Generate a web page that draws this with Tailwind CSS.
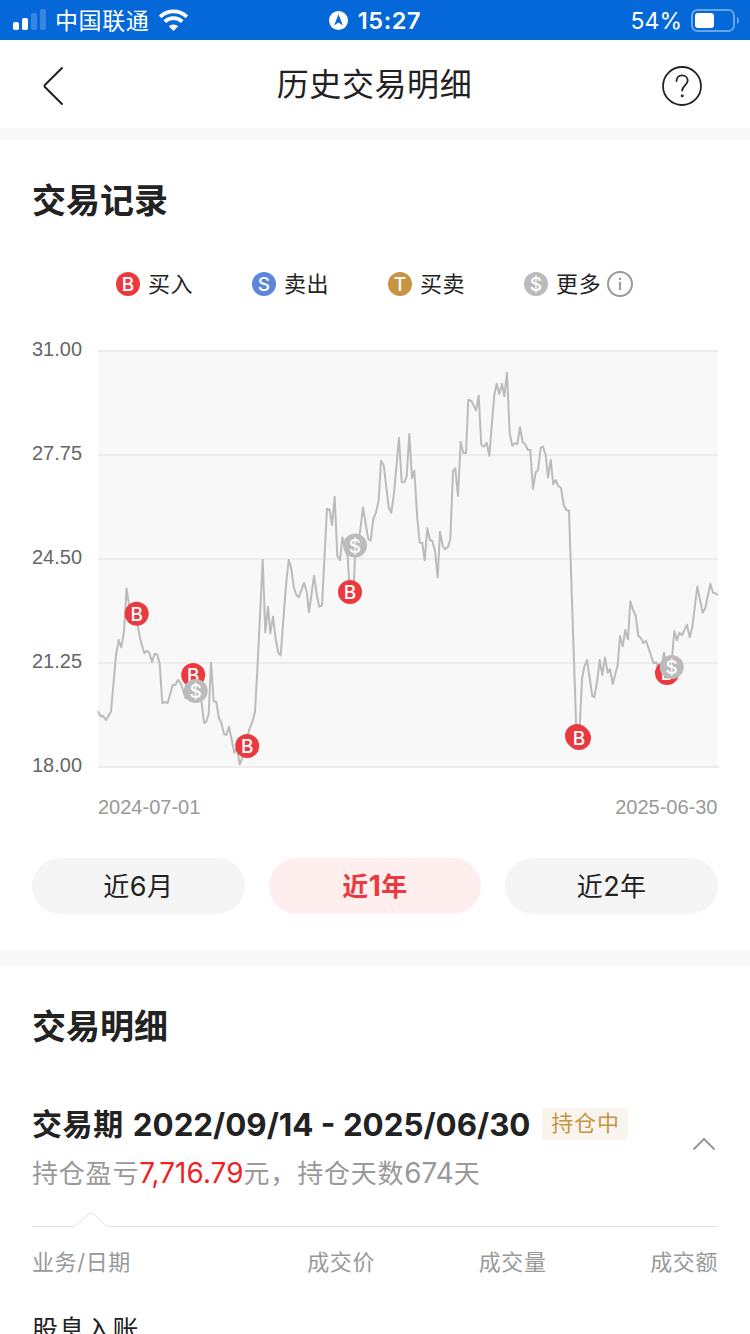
<!DOCTYPE html>
<html lang="zh-CN">
<head>
    <meta charset="UTF-8">
    <meta name="viewport" content="width=device-width, initial-scale=1.0">
    <title>历史交易明细</title>
    <script src="https://cdn.jsdelivr.net/npm/@tailwindcss/browser@4"></script>
    <style>
        body {
            font-family: 'Inter', 'Noto Sans CJK SC', sans-serif;
        }
    </style>
</head>
<body class="bg-white text-[#222] w-[750px] h-[1334px] overflow-hidden">
    <!-- Status bar -->
    <div class="h-10 bg-[#0568d8] text-white grid grid-cols-3 items-center">
        <div class="flex items-center pl-[13px]">
            <svg class="w-[33px] h-[22px]" viewBox="0 0 33 22" fill="currentColor">
                <rect x="0" y="13" width="6" height="8" rx="1.8"/>
                <rect x="9" y="9" width="6" height="12" rx="1.8"/>
                <rect x="18" y="4" width="6" height="17" rx="1.8" opacity=".2"/>
                <rect x="27" y="0" width="6" height="21" rx="1.8" opacity=".2"/>
            </svg>
            <span class="ml-[9px] pt-0.5 text-[23px] leading-[38px] tracking-[0.6px]">中国联通</span>
            <svg class="ml-[9px] w-[31px] h-[22px]" viewBox="0 0 31 22" fill="none" stroke="currentColor" stroke-width="3.8">
                <path d="M2.2 7.8a19 19 0 0 1 26.600 0"/>
                <path d="M6.800 12.600a12.500 12.500 0 0 1 17.400 0"/>
                <path d="M15.500 22l-4.700-4.700a6.800 6.800 0 0 1 9.400 0z" fill="currentColor" stroke="none"/>
            </svg>
        </div>
        <div class="flex items-center justify-center gap-[10px]">
            <svg class="w-[19px] h-[19px]" viewBox="0 0 19 19">
                <circle cx="9.500" cy="9.500" r="9.500" fill="#fff"/>
                <path d="M9.500 3.300l4.400 11.300-4.400-3-4.400 3z" fill="#0568d8"/>
            </svg>
            <span class="pt-0.5 text-[23.500px] font-semibold tracking-[0.6px]">15:27</span>
        </div>
        <div class="flex items-center justify-end pr-[11px]">
            <span class="pt-0.5 text-[23px]">54%</span>
            <svg class="ml-[9px] w-[48px] h-[23px]" viewBox="0 0 48 23">
                <rect x="1" y="1" width="42" height="21" rx="5.500" fill="none" stroke="#fff" stroke-opacity=".4" stroke-width="2"/>
                <rect x="4" y="4" width="19" height="15" rx="3" fill="#fff"/>
                <path d="M46 8c2.500 1 2.500 6 0 7z" fill="#fff" fill-opacity=".45"/>
            </svg>
        </div>
    </div>

    <!-- Title bar -->
    <header class="h-[88px] flex items-center justify-between pl-[42px] pr-[48px]">
        <svg class="w-[42px] h-10 mt-1" viewBox="0 0 42 40" fill="none" stroke="#222" stroke-width="2" stroke-linecap="round" stroke-linejoin="round">
            <path d="M20 2L2.600 19.200v1.600L20 38"/>
        </svg>
        <h1 class="pt-px pl-[3px] text-[32px] leading-[48px] tracking-[0.6px]">历史交易明细</h1>
        <svg class="w-10 h-10 mt-1" viewBox="0 0 40 40" fill="none" stroke="#222" stroke-width="1.8" stroke-linecap="round">
            <circle cx="20" cy="20" r="19"/>
            <path d="M14.500 15c0-3.500 2.400-5.600 5.600-5.600s5.600 2.100 5.600 5.100c0 4.700-5.500 5-5.500 10.100"/>
            <circle cx="20.200" cy="29.700" r=".6"/>
        </svg>
    </header>
    <div class="h-3 bg-[#f8f8f8]"></div>

    <!-- Trade record chart -->
    <section class="h-[810px] pt-[36px]">
        <h2 class="px-8 text-[34px] leading-[50px] font-bold">交易记录</h2>

        <div class="mt-[42px] h-8 pl-[116px] flex items-center text-[22px]">
            <div class="w-[136px] flex items-center gap-2">
                <span class="w-6 h-6 rounded-full bg-[#eb3940] text-white text-[19px] leading-[25px] font-medium text-center">B</span>
                <span class="tracking-[0.6px]">买入</span>
            </div>
            <div class="w-[136px] flex items-center gap-2">
                <span class="w-6 h-6 rounded-full bg-[#5c86d9] text-white text-[19px] leading-[25px] font-medium text-center">S</span>
                <span class="tracking-[0.6px]">卖出</span>
            </div>
            <div class="w-[136px] flex items-center gap-2">
                <span class="w-6 h-6 rounded-full bg-[#c69443] text-white text-[19px] leading-[26px] font-medium text-center">T</span>
                <span class="tracking-[0.6px]">买卖</span>
            </div>
            <div class="flex items-center gap-2">
                <span class="w-6 h-6 rounded-full bg-[#bbb] text-white text-[19px] leading-[25px] font-medium text-center">$</span>
                <span class="tracking-[0.8px]">更多</span>
                <svg class="-ml-[3px] w-[26px] h-[26px]" viewBox="0 0 26 26" fill="none" stroke="#999" stroke-width="2">
                    <circle cx="13" cy="13" r="12"/>
                    <path d="M13 11v8M13 6.700v2.200"/>
                </svg>
            </div>
        </div>

        <svg class="block w-[750px] h-[500px] mt-[30px]" viewBox="0 330 750 500">
            <rect x="98" y="350" width="620" height="417" fill="#f8f8f8"/>
            <g stroke="#ececec" stroke-width="2">
                <path d="M98 351H718M98 455H718M98 559H718M98 663H718M98 767H719"/>
            </g>
            <g font-family="Liberation Sans, sans-serif" font-size="20" fill="#666">
                <text x="32" y="356">31.00</text>
                <text x="32" y="460">27.75</text>
                <text x="32" y="564">24.50</text>
                <text x="32" y="668">21.25</text>
                <text x="32" y="772">18.00</text>
                <text x="98" y="814" fill="#999">2024-07-01</text>
                <text x="717.500" y="814" fill="#999" text-anchor="end">2025-06-30</text>
            </g>
            <polyline fill="none" stroke="#bbb" stroke-width="2" stroke-linejoin="round" points="
                98,711.300 100.700,716.500 103,715.700 106,720 108.300,716.300 111,711.300 116,655 118.700,640 121.300,647.300 124,631.700
                126.500,588.500 128.700,603.300 132,610 138,626.700 140,638.300 144.300,653.300 147,650.700 149.300,652.700 152,662 154.700,653.700
                157.300,654.700 159.700,664 162.300,703.300 165,702 167.700,703 172.700,685 175.300,685 178,680 180.700,683.300 185.700,698.300
                190,688 198,684 201.700,703.300 204,722.700 206,722.300 208.700,714 211,662.700 213.700,701 216.300,702 219,718.300
                221.300,722.700 224,734 226.300,735 229,726.700 234.300,752.700 237,748 239.700,764.300 242.300,758.300 245,745 249.700,728.300
                252.700,721 255,711.700 257.700,663.300 262.700,560 265.300,632.300 268,606.700 270.300,633.300 273,616.700 275.700,639 278.300,652.700
                280.700,655.300 286,585 288.700,560 291.200,568 293.700,586.700 296.300,595 298.700,597.300 301.300,590.700 304,582.700 306.700,591.700
                309,612.300 314,575.700 317,596 319.300,606.700 322,605.300 327,508.700 329.700,510 332,525 334.700,496.700 337.300,556
                340,560.300 342.300,537.300 345,548 347.700,556.700 349.300,584 354,582 355,555 360,531.700 363,507.300 365.700,524
                368.300,539 370.700,540.700 373.300,519 376,512.700 378.700,500 381,460.700 383.700,465 388.700,507.300 391.300,512.700 394,493.300
                399,437.700 401.700,482 404.300,482.300 406.700,476 409.300,434 412,478.300 414.300,470.700 417.300,518.300 419.700,542.700 422.300,543
                424.700,560.300 427.300,528.300 430,540 432.300,541 435,551 437.700,577.300 440,532 442.700,546 445.300,549.300 448,546.700
                450.300,539.300 453,471 455.300,468.300 458,495.700 460.700,441.700 463.300,453 466,453 468.300,400 471.300,400.700 476,410.300
                478.700,395.700 481.300,445 484,446.700 486.700,442.700 489.300,455.700 494.300,395 496.700,383.700 499.300,394 502,383.700 504.300,396.300
                507,372.700 509.700,433.300 512.300,445.700 515,443.300 517.300,444 520,427.300 522.700,442.300 525,444 527.700,449.700 530.300,450
                533,488.700 535.700,472.300 538,470.300 540.700,447.700 543,446.700 545.700,455 548,477.700 550.700,460 553.300,484.300 555.700,480
                558.300,486 561,488 563.700,505 566.300,510 569,510.700 576.300,730 579.300,735 582,679 584.300,666.700 587,660
                592.300,696 594.300,697.300 597.300,680 599.700,660 602.300,675 605,657.700 607.700,672.700 610,669 612.700,684 617.700,665
                620,636 622.700,646.300 625.300,630 628,639.300 630.300,601.300 633,609.700 635.700,615.700 638.300,636 641,638.300 643.300,643
                646,640.700 653.700,663.300 656,662.300 661.300,671.700 664,652.700 667,668 671.700,661.700 674.300,631 677,640.300 679.300,632.700
                682,635 687,624.700 689.700,637.300 692.300,627.300 697.300,586.700 702.700,612.700 705.300,608 710.300,583.700 713,592.700 715.300,593.300
                718,595.300"/>
            <!-- Trade markers -->
            <g font-family="Inter, sans-serif" font-size="19" font-weight="500" fill="#fff" text-anchor="middle">
                <circle cx="136.700" cy="613.700" r="12" fill="#eb3940"/>
                <text x="136.700" y="620.700">B</text>
                <circle cx="193.200" cy="675" r="12" fill="#eb3940"/>
                <text x="193.200" y="682">B</text>
                <circle cx="195.700" cy="691" r="12" fill="#bbb"/>
                <text x="195.700" y="698">$</text>
                <circle cx="247.200" cy="746" r="12" fill="#eb3940"/>
                <text x="247.200" y="753">B</text>
                <circle cx="350" cy="592" r="12" fill="#eb3940"/>
                <text x="350" y="599">B</text>
                <circle cx="355" cy="545.500" r="12" fill="#bbb"/>
                <text x="355" y="552.500">$</text>
                <circle cx="577" cy="736" r="12" fill="#eb3940"/>
                <circle cx="579" cy="738" r="12" fill="#eb3940"/>
                <text x="579" y="745">B</text>
                <circle cx="667" cy="673" r="12" fill="#eb3940"/>
                <text x="667" y="680">B</text>
                <circle cx="671.700" cy="667" r="12" fill="#bbb"/>
                <text x="671.700" y="674">$</text>
            </g>
        </svg>

        <div class="mt-7 px-8 grid grid-cols-3 gap-6 text-[26px] leading-14 tracking-[0.4px] text-center">
            <button class="h-14 pt-px rounded-full bg-[#f5f5f5]">近<span class="text-[27px]">6</span>月</button>
            <button class="h-14 rounded-full bg-[#ffeeee] text-[#eb3940] font-bold">近<span class="text-[28px]">1</span>年</button>
            <button class="h-14 pt-px rounded-full bg-[#f5f5f5]">近<span class="text-[27px]">2</span>年</button>
        </div>
    </section>
    <div class="h-4 bg-[#f8f8f8]"></div>

    <!-- Trade details -->
    <section class="px-8 pt-[36px]">
        <h2 class="text-[34px] leading-[50px] font-bold">交易明细</h2>

        <div class="mt-[49px] flex items-center justify-between">
            <div>
                <div class="h-12 flex items-center">
                    <span class="-mt-0.5 text-[30px] leading-12 font-bold tracking-[0.6px] whitespace-nowrap">交易期</span>
                    <span class="ml-[9px] text-[31.300px] leading-12 font-bold whitespace-nowrap">2022/09/14 - 2025/06/30</span>
                    <span class="-mt-0.5 ml-3 w-[86px] h-8 rounded bg-[#f9f5ee] text-[#c69443] text-[22px] leading-[30px] tracking-[0.8px] text-center">持仓中</span>
                </div>
                <p class="h-12 text-[26px] leading-12 tracking-[0.8px] text-[#999] whitespace-nowrap">持仓盈亏<span class="text-[27.800px] tracking-[0.1px] text-[#f01f24]">7,716.79</span>元，持仓天数<span class="text-[27.800px] tracking-normal">674</span>天</p>
            </div>
            <svg class="w-6 h-4 mr-0.5 mb-[11px]" viewBox="0 0 24 16" fill="none" stroke="#999" stroke-width="2">
                <path d="M1.500 13.500L12 3l10.500 10.500"/>
            </svg>
        </div>

        <svg class="block w-[686px] h-4 mt-[15px]" viewBox="0 0 686 16" fill="none" stroke="#e3e3e3" stroke-width="1">
            <path d="M0 14.500H40q3 0 5-2L56 2.500q3-2.500 6 0L73 12.500q2 2 5 2H686"/>
        </svg>

        <div class="mt-[16px] grid grid-cols-4 text-[22px] leading-9 tracking-[0.6px] text-[#999] text-right">
            <span class="text-left">业务/日期</span>
            <span>成交价</span>
            <span>成交量</span>
            <span>成交额</span>
        </div>
        <p class="mt-[30px] text-[26px] leading-10 tracking-[0.8px]">股息入账</p>
    </section>
</body>
</html>
